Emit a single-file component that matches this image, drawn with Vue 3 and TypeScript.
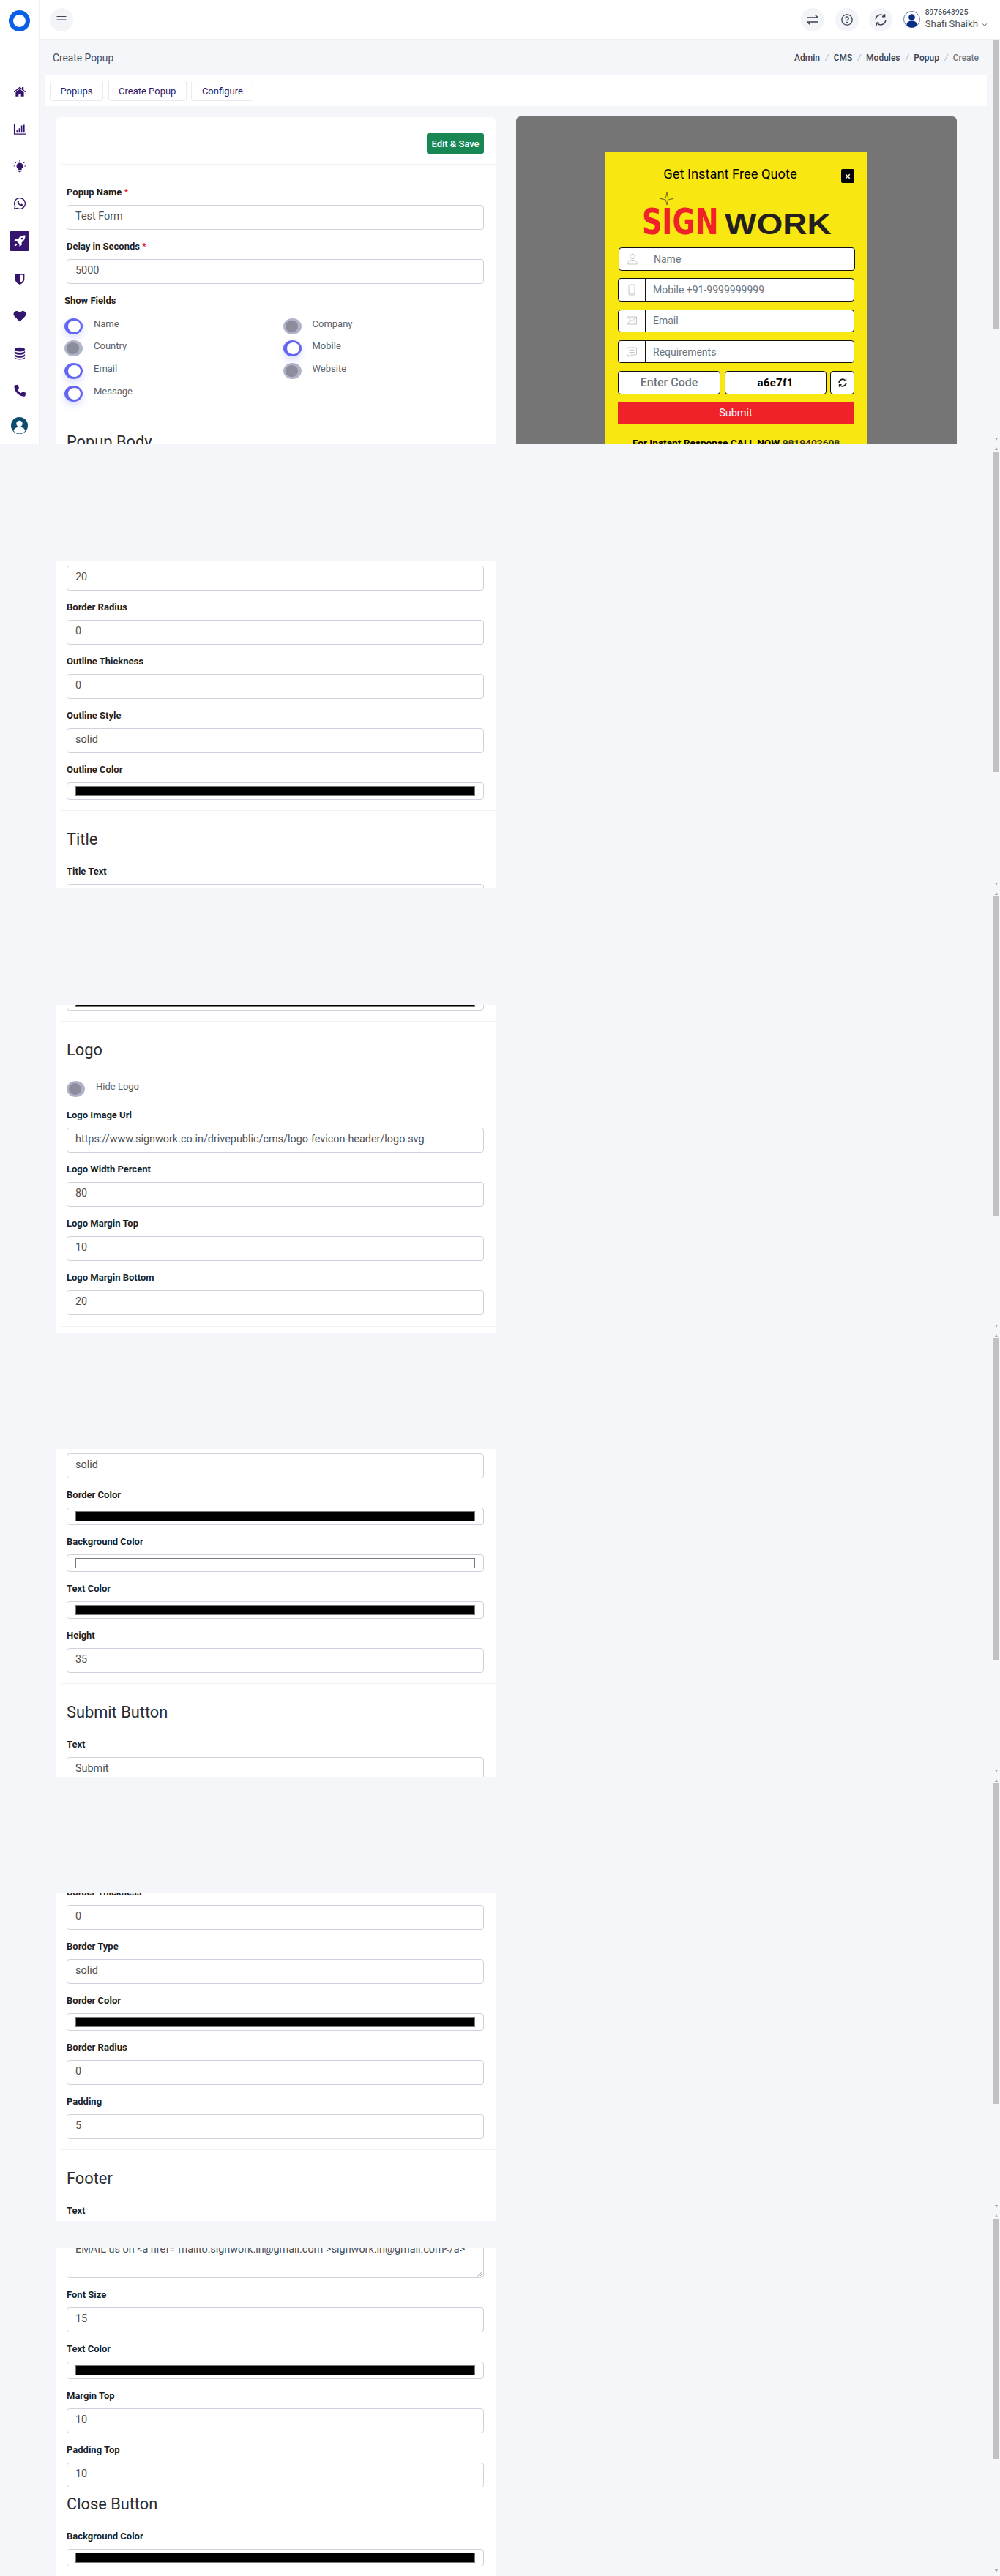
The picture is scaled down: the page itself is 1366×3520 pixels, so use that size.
<template>
  <div class="page">
    <div class="top-slice">
      <aside class="sidebar">
        <div class="brand"><span class="brand-ring" /></div>
        <a v-for="item in navItems" :key="item.name" class="nav-item">
          <span class="nav-icon" :class="{ active: item.active }">
            <svg viewBox="0 0 24 24" width="18" height="18" v-html="item.svg" />
          </span>
        </a>
        <div class="side-avatar">
          <svg viewBox="0 0 24 24" width="23" height="23">
            <circle cx="12" cy="12" r="12" fill="#0e4c6d" />
            <circle cx="12" cy="9.4" r="4.4" fill="#fff" />
            <path d="M3.8 19.6c1.2-4 4.4-5.4 8.2-5.4s7 1.4 8.2 5.4C18.2 22.4 15.4 23.6 12 23.6s-6.200-1.200-8.200-4z" fill="#fff" />
          </svg>
        </div>
      </aside>

      <div class="main">
        <header class="topbar">
          <button class="round-btn burger">
            <svg viewBox="0 0 16 16" width="16" height="16">
              <path d="M1.500 3.500h13M1.500 8h13M1.500 12.500h13" stroke="#3c4654" stroke-width="1.200" fill="none" />
            </svg>
          </button>
          <div class="top-actions">
            <button class="round-btn">
              <svg viewBox="0 0 18 18" width="18" height="18" fill="none" stroke="#3a4252" stroke-width="1.500">
                <path d="M1.500 6h15M12.500 2.500 16.500 6M16.500 12H1.500M5.500 15.500 1.500 12" />
              </svg>
            </button>
            <button class="round-btn">
              <svg viewBox="0 0 18 18" width="18" height="18" fill="none" stroke="#3a4252" stroke-width="1.300">
                <circle cx="9" cy="9" r="7.200" />
                <path d="M6.800 7.200c0-3 4.500-3 4.500-.2 0 1.800-2.300 1.800-2.300 3.600" />
                <circle cx="9" cy="12.800" r=".5" fill="#3a4252" />
              </svg>
            </button>
            <button class="round-btn">
              <svg viewBox="0 0 18 18" width="18" height="18" fill="none" stroke="#3a4252" stroke-width="1.500">
                <path d="M2.200 8.400A6.800 6.800 0 0 1 14 4.400M15.800 9.600A6.800 6.800 0 0 1 4 13.600" />
                <path d="M14.600 1.200v3.600H11M3.400 16.800v-3.600H7" />
              </svg>
            </button>
          </div>
          <div class="user">
            <svg class="user-pic" viewBox="0 0 24 24" width="23" height="23">
              <circle cx="12" cy="12" r="11.500" fill="#fff" stroke="#223a7a" stroke-width=".7" />
              <circle cx="12" cy="9" r="4.500" fill="#082f84" />
              <path d="M4.500 20c.5-4.500 3.500-6 7.500-6s7 1.500 7.500 6c-2 2.300-4.500 3.500-7.500 3.500S6.500 22.300 4.500 20z" fill="#082f84" />
            </svg>
            <div class="user-text">
              <span class="user-phone">8976643925</span>
              <span class="user-name">Shafi Shaikh</span>
            </div>
            <svg class="user-caret" viewBox="0 0 10 10" width="8" height="8">
              <path d="M1.500 3 5 6.800 8.500 3" stroke="#495057" stroke-width="1.200" fill="none" />
            </svg>
          </div>
        </header>

        <div class="title-row">
          <h1 class="page-title">Create Popup</h1>
          <ol class="crumbs">
            <li v-for="(crumb, i) in crumbs" :key="crumb" :class="{ last: i === crumbs.length - 1 }">{{ crumb }}</li>
          </ol>
        </div>

        <nav class="tabs">
          <a v-for="tab in tabs" :key="tab" class="tab">{{ tab }}</a>
        </nav>

        <div class="workspace">
          <section class="card first-card">
            <div class="card-head"><button class="save-btn">Edit &amp; Save</button></div>
            <div class="rule" />
            <div class="fields-top">
              <div class="field">
                <label class="lbl">Popup Name <em>*</em></label>
                <div class="inp">Test Form</div>
              </div>
              <div class="field">
                <label class="lbl">Delay in Seconds <em>*</em></label>
                <div class="inp">5000</div>
              </div>
              <div class="lbl show-fields">Show Fields</div>
              <div class="check-grid">
                <label v-for="c in showFields" :key="c.name" class="check" :style="{ gridRow: c.row, gridColumn: c.col }">
                  <span class="tick" :class="{ on: c.on }" />
                  <span class="check-text">{{ c.name }}</span>
                </label>
              </div>
            </div>
            <div class="rule" />
            <h2 class="heading">Popup Body</h2>
          </section>

          <section class="preview">
            <div class="popup">
              <div class="popup-head">
                <h3 class="popup-title">Get Instant Free Quote</h3>
                <button class="popup-close">
                  <svg viewBox="0 0 10 10" width="8" height="8">
                    <path d="M1.500 1.500l7 7M8.500 1.500l-7 7" stroke="#fff" stroke-width="2" />
                  </svg>
                </button>
              </div>
              <svg class="popup-logo" viewBox="0 0 260 72" width="260" height="72">
                <path d="M35 1 36.500 8 44 9.500 36.500 11 35 18 33.500 11 26 9.500 33.500 8Z" fill="none" stroke="#59511a" stroke-width=".8" />
                <text transform="translate(1 58) scale(.76 1)" class="logo-sign">SIGN</text>
                <text transform="translate(114 58) scale(1.15 1)" class="logo-work">WORK</text>
              </svg>
              <div class="popup-fields">
                <div v-for="row in popupRows" :key="row.text" class="pop-row" :class="row.cls">
                  <span class="pop-icon"><svg viewBox="0 0 16 16" width="16" height="16" fill="none" stroke="#c4c4c4" stroke-width="1" v-html="row.svg" /></span>
                  <span class="pop-text">{{ row.text }}</span>
                </div>
              </div>
              <div class="captcha">
                <div class="cap-input">Enter Code</div>
                <div class="cap-code">a6e7f1</div>
                <button class="cap-refresh">
                  <svg viewBox="0 0 16 16" width="14" height="14" fill="none" stroke="#222" stroke-width="2">
                    <path d="M2.500 8a5.500 5.500 0 0 1 9.500-3.700M13.500 8A5.500 5.500 0 0 1 4 11.700" />
                    <path d="M13.200 1.500v3.500H9.700M2.800 14.500V11h3.500" stroke-width="1.400" />
                  </svg>
                </button>
              </div>
              <button class="pop-submit">Submit</button>
              <p class="pop-call">For Instant Response CALL NOW <span>9819402608</span></p>
            </div>
          </section>
        </div>
      </div>
    </div>

    <section v-for="(slice, s) in slices" :key="s" class="card slice" :class="{ 'slice-last': s === slices.length - 1 }">
      <div :style="{ marginTop: slice.offset + 'px' }">
        <template v-for="(f, i) in slice.items" :key="i">
          <div v-if="f.kind === 'rule'" class="rule" :style="{ marginTop: f.before + 'px' }" />
          <h2 v-else-if="f.kind === 'heading'" class="heading" :style="{ marginTop: f.before + 'px' }">{{ f.label }}</h2>
          <label v-else-if="f.kind === 'toggle'" class="check solo">
            <span class="tick" />
            <span class="check-text">{{ f.label }}</span>
          </label>
          <div v-else-if="f.kind === 'color'" class="field">
            <label v-if="f.label" class="lbl">{{ f.label }}</label>
            <div class="inp color"><span class="swatch" :style="{ background: f.value }" /></div>
          </div>
          <div v-else-if="f.kind === 'area'" class="field">
            <div class="inp area">{{ f.value }}
              <svg class="grip" viewBox="0 0 10 10" width="8" height="8"><path d="M9.500 1.500l-8 8M9.500 5.500l-4 4" stroke="#777" stroke-width=".8" /></svg>
            </div>
          </div>
          <div v-else class="field">
            <label v-if="f.label" class="lbl">{{ f.label }}</label>
            <div class="inp">{{ f.value }}</div>
          </div>
        </template>
      </div>
    </section>

    <div class="scroll-rail">
      <template v-for="(t, i) in thumbs" :key="i">
        <div v-if="t.gap" class="arrows" :style="{ marginTop: t.gap - 19 + 'px' }">
          <span class="arrow-down" />
          <span class="arrow-up" />
        </div>
        <div class="thumb" :style="{ height: t.height + 'px' }" />
      </template>
      <span class="arrow-down rail-end" />
    </div>
  </div>
</template>

<script setup lang="ts">
type Item = {
  kind: "input" | "color" | "rule" | "heading" | "toggle" | "area";
  label?: string;
  value?: string;
  before?: number;
};

const crumbs = ["Admin", "CMS", "Modules", "Popup", "Create"];
const tabs = ["Popups", "Create Popup", "Configure"];

const navItems = [
  {
    name: "home",
    svg: '<path fill="#35156e" d="M12 3.200 1 12.300l1.200 1.400L12 5.700l9.800 8 1.200-1.400-4-3.300V4h-3v2.500zM12 7.300 4.500 13.400V21h5.300v-5h4.400v5h5.300v-7.600z"/>',
  },
  {
    name: "chart",
    svg: '<path fill="none" stroke="#35156e" stroke-width="1.500" d="M2 2.500V21.500H23"/><path fill="#35156e" d="M6 14h2.200v5H6zM10.200 11h2.200v8h-2.200zM14.400 6h2.200v13h-2.200zM18.600 4.500h2.200V19h-2.200z"/>',
  },
  {
    name: "bulb",
    svg: '<path fill="#35156e" d="M12 6a6 6 0 0 0-3.500 10.800V19h7v-2.200A6 6 0 0 0 12 6zM9.500 20h5v1.500L13 23h-2l-1.500-1.500z"/><path stroke="#35156e" stroke-width="1.500" d="M12 1v2.500M3 4.500l2 2M21 4.500l-2 2M1 12h2.500M20.500 12H23"/>',
  },
  {
    name: "whatsapp",
    svg: '<path fill="none" stroke="#35156e" stroke-width="1.800" d="M12 2.200a9.800 9.800 0 0 0-8.400 14.800L2.200 21.800l5-1.300A9.800 9.800 0 1 0 12 2.200z"/><path fill="#35156e" d="M8.800 7c-.8.500-1.500 1.700-1 3.300.8 2.800 3.500 5.500 6.300 6.200 1.500.400 2.800-.2 3.200-1.200.2-.6.200-1.100 0-1.300l-2.400-1.200-1.100 1.300c-1.400-.4-3.200-2.200-3.800-3.700l1-1.100L9.900 7z"/>',
  },
  {
    name: "rocket",
    active: true,
    svg: '<path fill="#fff" d="M22 2c-5.500-.2-9.800 1.700-13 6.500H4.300L1.500 12.500 6.500 13 11 17.500l.5 5 4-2.800v-4.700C20.300 11.800 22.200 7.500 22 2zM16 6.300a1.800 1.800 0 1 1 0 3.600 1.800 1.800 0 0 1 0-3.600zM5 17c-1.500.5-2.500 2-2.800 4.800C5 21.500 6.500 20.500 7 19z"/>',
  },
  {
    name: "shield",
    svg: '<path fill="#35156e" d="M3.500 2.500h17V12c0 5-3.500 8.500-8.500 10.500C7 20.500 3.500 17 3.500 12z"/><path fill="#fff" d="M12 5h6v7c0 3.500-2.500 6.200-6 7.800z"/>',
  },
  {
    name: "heart",
    svg: '<path fill="#35156e" d="M12 22 2.500 12.500C0 10 0 6.300 2.500 4c2.500-2.200 6-1.800 8.300.5L12 5.700l1.200-1.200c2.300-2.300 5.800-2.700 8.300-.5 2.500 2.300 2.500 6 0 8.500z"/>',
  },
  {
    name: "database",
    svg: '<ellipse cx="12" cy="4.800" rx="9.500" ry="3.800" fill="#35156e"/><path fill="#35156e" d="M2.500 7.800C4 10 8 10.700 12 10.700s8-.7 9.500-2.900v3.400C20 13.400 16 14.200 12 14.200S4 13.400 2.500 11.200zM2.500 13.300C4 15.400 8 16.200 12 16.200s8-.8 9.500-2.900v3.400C20 19 16 19.700 12 19.700S4 19 2.500 16.700zM2.500 18.500C4 20.700 8 21.400 12 21.400s8-.7 9.500-2.900v1.800C20 22.300 16 23.200 12 23.200s-8-.9-9.500-2.900z"/>',
  },
  {
    name: "phone",
    svg: '<path fill="#35156e" d="M4 1.500 8.500 1l2.300 6-3 2.200c1 2.800 3.700 5.700 6.700 7l2.300-3 6 2.500-.6 4.600c-.2 1.300-1.400 2.200-2.700 2.100C10 21.600 2.500 13.800 1.900 4c0-1.300.8-2.400 2.100-2.500z"/>',
  },
];

const showFields = [
  { name: "Name", on: true, row: 1, col: 1 },
  { name: "Company", on: false, row: 1, col: 2 },
  { name: "Country", on: false, row: 2, col: 1 },
  { name: "Mobile", on: true, row: 2, col: 2 },
  { name: "Email", on: true, row: 3, col: 1 },
  { name: "Website", on: false, row: 3, col: 2 },
  { name: "Message", on: true, row: 4, col: 1 },
];

const popupRows = [
  {
    text: "Name",
    cls: "first",
    svg: '<circle cx="8" cy="4.500" r="3.200"/><path d="M2 15v-1.500C2 11 4.500 9.500 8 9.500s6 1.500 6 4V15z"/>',
  },
  {
    text: "Mobile +91-9999999999",
    svg: '<rect x="4" y="1" width="8" height="14" rx="1"/><path d="M4 13h8"/>',
  },
  {
    text: "Email",
    svg: '<rect x="1.500" y="3" width="13" height="10"/><path d="M1.500 3 8 8.500 14.500 3M1.500 13 6 7.500M14.500 13 10 7.500"/>',
  },
  {
    text: "Requirements",
    svg: '<path d="M2.500 2h11a1 1 0 0 1 1 1v8a1 1 0 0 1-1 1H6l-3 2.500V12h-.5a1 1 0 0 1-1-1V3a1 1 0 0 1 1-1z"/><path d="M4.500 5.200h7M4.500 8.500h7"/>',
  },
];

const input = (label: string, value: string): Item => ({ kind: "input", label, value });
const color = (label: string, value = "#000"): Item => ({ kind: "color", label, value });
const rule = (before: number): Item => ({ kind: "rule", before });
const heading = (label: string, before = 0): Item => ({ kind: "heading", label, before });

const slices: { offset: number; items: Item[] }[] = [
  {
    offset: 7,
    items: [
      { kind: "input", value: "20" },
      input("Border Radius", "0"),
      input("Outline Thickness", "0"),
      input("Outline Style", "solid"),
      color("Outline Color"),
      rule(14),
      heading("Title"),
      input("Title Text", ""),
    ],
  },
  {
    offset: -16.5,
    items: [
      { kind: "color", value: "#000" },
      rule(14),
      heading("Logo"),
      { kind: "toggle", label: "Hide Logo" },
      input("Logo Image Url", "https://www.signwork.co.in/drivepublic/cms/logo-fevicon-header/logo.svg"),
      input("Logo Width Percent", "80"),
      input("Logo Margin Top", "10"),
      input("Logo Margin Bottom", "20"),
      rule(15),
    ],
  },
  {
    offset: 6,
    items: [
      { kind: "input", value: "solid" },
      color("Border Color"),
      color("Background Color", "#fff"),
      color("Text Color"),
      input("Height", "35"),
      rule(14),
      heading("Submit Button"),
      input("Text", "Submit"),
    ],
  },
  {
    offset: -11,
    items: [
      input("Border Thickness", "0"),
      input("Border Type", "solid"),
      color("Border Color"),
      input("Border Radius", "0"),
      input("Padding", "5"),
      rule(14),
      heading("Footer"),
      input("Text", ""),
    ],
  },
  {
    offset: -31,
    items: [
      { kind: "area", value: 'EMAIL us on <a href="mailto:signwork.in@gmail.com">signwork.in@gmail.com</a>' },
      input("Font Size", "15"),
      color("Text Color"),
      input("Margin Top", "10"),
      input("Padding Top", "10"),
      heading("Close Button", -29),
      color("Background Color"),
    ],
  },
];

const thumbs = [
  { gap: 0, height: 395 },
  { gap: 168, height: 438 },
  { gap: 170, height: 436 },
  { gap: 168, height: 440 },
  { gap: 168, height: 438 },
  { gap: 157, height: 328 },
];
</script>

<style>
html,
body {
  margin: 0;
  background: #f5f6fa;
}
</style>

<style scoped>
.page {
  position: relative;
  width: 1366px;
  height: 3520px;
  overflow: hidden;
  background: #f5f6fa;
  font-family: Roboto, "Liberation Sans", sans-serif;
  font-size: 14px;
  color: #495057;
}
button {
  border: 0;
  padding: 0;
  font-family: inherit;
  cursor: pointer;
}

/* top part */
.top-slice {
  display: flex;
  height: 607px;
  overflow: hidden;
}
.sidebar {
  flex: 0 0 54px;
  box-sizing: border-box;
  background: #fff;
  border-right: 1px solid #eef0f5;
  display: flex;
  flex-direction: column;
  align-items: center;
}
.brand {
  height: 99px;
  display: flex;
  padding-top: 14px;
  box-sizing: border-box;
}
.brand-ring {
  width: 17px;
  height: 17px;
  border: 6.500px solid #0a5fe8;
  border-radius: 50%;
}
.nav-item {
  height: 51.200px;
  display: flex;
  align-items: center;
  justify-content: center;
}
.nav-icon {
  width: 27px;
  height: 27px;
  display: flex;
  align-items: center;
  justify-content: center;
  border-radius: 2px;
}
.nav-icon.active {
  background: #35156e;
}
.side-avatar {
  margin-top: 7px;
  height: 30px;
  display: flex;
  align-items: center;
}
.main {
  flex: 1;
  min-width: 0;
}
.topbar {
  height: 54px;
  box-sizing: border-box;
  background: #fff;
  border-bottom: 1px solid #eef0f5;
  display: flex;
  align-items: center;
  padding: 0 17px 0 14px;
}
.round-btn {
  width: 32px;
  height: 32px;
  border-radius: 50%;
  background: #f3f4f8;
  display: flex;
  align-items: center;
  justify-content: center;
}
.burger {
  margin-right: auto;
}
.top-actions {
  display: flex;
  gap: 14.500px;
}
.user {
  display: flex;
  align-items: center;
  margin-left: 14.700px;
}
.user-text {
  display: flex;
  flex-direction: column;
  margin-left: 7px;
  width: 72px;
}
.user-phone {
  font-size: 10px;
  font-weight: 500;
  letter-spacing: 0.2px;
  line-height: 13px;
}
.user-name {
  font-size: 13.200px;
  line-height: 20px;
  white-space: nowrap;
}
.user-caret {
  margin: 15px 0 0 5.300px;
}
.title-row {
  height: 49px;
  box-sizing: border-box;
  display: flex;
  align-items: center;
  justify-content: space-between;
  padding: 0 29px 0 18px;
}
.page-title {
  margin: 0;
  font-size: 13.800px;
  font-weight: 400;
  color: #3d4b5f;
}
.crumbs {
  list-style: none;
  display: flex;
  margin: 0;
  padding: 0;
  font-size: 12px;
  font-weight: 500;
  color: #3a4250;
}
.crumbs li + li::before {
  content: "/";
  font-weight: 400;
  color: #adb5bd;
  margin: 0 7px;
  font-style: italic;
}
.crumbs .last {
  color: #6c757d;
}
.tabs {
  margin-left: 7px;
  width: 1287px;
  height: 42px;
  box-sizing: border-box;
  background: #fff;
  padding: 7px;
  display: flex;
  gap: 6.500px;
}
.tab {
  height: 28px;
  box-sizing: border-box;
  padding: 0 13.500px;
  display: flex;
  align-items: center;
  border: 1px solid #e9ebf2;
  border-radius: 3px;
  font-size: 13px;
  color: #2d1a6b;
}
.workspace {
  display: flex;
  gap: 28px;
  margin: 15px 0 0 21.500px;
}

/* form card */
.card {
  width: 601.500px;
  box-sizing: border-box;
  background: #fff;
  padding: 0 16px 0 15.500px;
}
.first-card {
  flex: none;
  height: 460px;
  border-radius: 6px 6px 0 0;
}
.card-head {
  height: 64px;
  box-sizing: border-box;
  padding-top: 22px;
  display: flex;
  justify-content: flex-end;
}
.save-btn {
  width: 78px;
  height: 28px;
  border-radius: 3px;
  background: #198754;
  color: #fff;
  font-size: 13px;
  font-weight: 500;
}
.rule {
  height: 1px;
  background: #eef0f5;
  margin-left: -7px;
  margin-right: -22px;
}
.fields-top {
  padding-top: 27.500px;
}
.field {
  margin-bottom: 13px;
}
.lbl {
  display: block;
  height: 20px;
  line-height: 20px;
  margin-bottom: 7px;
  font-size: 13px;
  font-weight: 700;
  color: #1c1f26;
}
.lbl em {
  font-style: normal;
  color: #f1142d;
  font-weight: 400;
}
.inp {
  position: relative;
  height: 34px;
  box-sizing: border-box;
  border: 1px solid #cfd2dc;
  border-radius: 4px;
  padding: 0 11px;
  line-height: 30px;
  font-size: 14.400px;
  color: #495057;
  background: #fff;
  white-space: nowrap;
  overflow: hidden;
}
.inp.color {
  height: 24px;
  display: flex;
  align-items: center;
}
.swatch {
  flex: 1;
  height: 12px;
  border: 1px solid #777;
}
.inp.area {
  height: 72px;
  padding-top: 22px;
  line-height: 20px;
}
.grip {
  position: absolute;
  right: 1px;
  bottom: 1px;
}
.show-fields {
  margin-left: -3px;
  margin-bottom: 14px;
}
.check-grid {
  display: grid;
  grid-template-columns: 298.500px 1fr;
  grid-auto-rows: 30.700px;
  margin-left: -3px;
  padding-bottom: 7px;
}
.check {
  display: flex;
  align-items: flex-start;
  height: 22px;
}
.check.solo {
  height: 37px;
  margin-top: 8px;
}
.tick {
  flex: none;
  width: 25px;
  height: 22px;
  box-sizing: border-box;
  border-radius: 50%;
  background: #b1b3c6;
  position: relative;
}
.tick::after {
  content: "";
  position: absolute;
  left: 3px;
  top: 3px;
  width: 17px;
  height: 16px;
  border-radius: 50%;
  background: #8b8c9c;
}
.tick.on {
  background: #6366f1;
  box-shadow: 0 5px 10px rgba(99, 102, 241, 0.22);
}
.tick.on::after {
  background: #fff;
  left: 5px;
}
.check-text {
  margin: -2px 0 0 15px;
  font-size: 13px;
  line-height: 20px;
  color: #585f69;
}
.heading {
  margin: 0;
  height: 73px;
  line-height: 78px;
  font-size: 21.800px;
  font-weight: 400;
  color: #2a2d33;
}

/* live preview */
.preview {
  flex: none;
  width: 602px;
  height: 460px;
  margin-top: -1px;
  box-sizing: border-box;
  padding-top: 49px;
  border-radius: 6px 6px 0 0;
  background: #757575;
  display: flex;
  justify-content: center;
}
.popup {
  width: 358px;
  height: 420px;
  box-sizing: border-box;
  background: #f9e711;
  padding: 23px 18px 0 17px;
}
.popup-head {
  position: relative;
  height: 19px;
  display: flex;
  justify-content: center;
}
.popup-title {
  margin: -3px 0 0 -16px;
  font-size: 18.300px;
  font-weight: 400;
  line-height: 20px;
  color: #000;
}
.popup-close {
  position: absolute;
  right: 0;
  top: 0;
  width: 18px;
  height: 19px;
  border-radius: 2px;
  background: #000;
  display: flex;
  align-items: center;
  justify-content: center;
}
.popup-logo {
  display: block;
  margin: 11.500px 0 0 32px;
}
.logo-sign {
  font-family: "DejaVu Sans", sans-serif;
  font-size: 50px;
  font-weight: 700;
  fill: #ef2229;
}
.logo-work {
  font-family: "Liberation Sans", sans-serif;
  font-size: 40px;
  font-weight: 700;
  fill: #231f20;
}
.popup-fields {
  margin-top: 4.500px;
}
.pop-row {
  height: 31.500px;
  box-sizing: border-box;
  border: 1.500px solid #111;
  border-radius: 4px;
  background: #fff;
  display: flex;
  align-items: center;
  margin-bottom: 10.800px;
}
.pop-row.first {
  margin-left: 1px;
  margin-right: -1px;
}
.pop-icon {
  flex: none;
  width: 36px;
  height: 100%;
  border-right: 1.500px solid #111;
  display: flex;
  align-items: center;
  justify-content: center;
}
.pop-text {
  margin-left: 10px;
  font-size: 14px;
  color: #6c757d;
}
.captcha {
  display: flex;
  gap: 5.500px;
}
.cap-input,
.cap-code,
.cap-refresh {
  flex: none;
  height: 31.500px;
  box-sizing: border-box;
  border: 1px solid #111;
  border-radius: 4px;
  background: #fff;
  display: flex;
  align-items: center;
  justify-content: center;
}
.cap-input {
  width: 140px;
  font-size: 16px;
  font-weight: 500;
  color: #6c757d;
}
.cap-code {
  width: 139px;
  font-size: 15px;
  font-weight: 700;
  letter-spacing: 0.3px;
  color: #000;
}
.cap-refresh {
  width: 33px;
}
.pop-submit {
  display: block;
  width: 322px;
  height: 29px;
  margin-top: 11px;
  background: #ef2229;
  color: #fff;
  font-size: 14.500px;
}
.pop-call {
  margin: 18.500px 0 0;
  text-align: center;
  font-size: 13.700px;
  line-height: 16px;
  font-weight: 700;
  color: #000;
  white-space: nowrap;
}
.pop-call span {
  color: #333;
}

/* stitched parts below */
.slice {
  display: flow-root;
  height: 448px;
  margin-left: 75.500px;
  margin-top: 159px;
  clip-path: inset(0 -6px 0 0);
}
.slice-last {
  margin-top: 37px;
}

.scroll-rail {
  position: absolute;
  top: 54px;
  right: 2px;
  width: 7px;
  display: flex;
  flex-direction: column;
}
.thumb {
  flex: none;
  background: #c1c1c1;
}
.arrows {
  height: 19px;
  display: flex;
  flex-direction: column;
  align-items: center;
}
.arrow-down,
.arrow-up {
  flex: none;
  width: 0;
  height: 0;
  border-left: 2.500px solid transparent;
  border-right: 2.500px solid transparent;
}
.arrow-down {
  border-top: 4px solid #a3a3a3;
}
.arrow-up {
  margin-top: 9px;
  border-bottom: 4px solid #a3a3a3;
}
.rail-end {
  align-self: center;
  margin-top: 151px;
}
</style>
